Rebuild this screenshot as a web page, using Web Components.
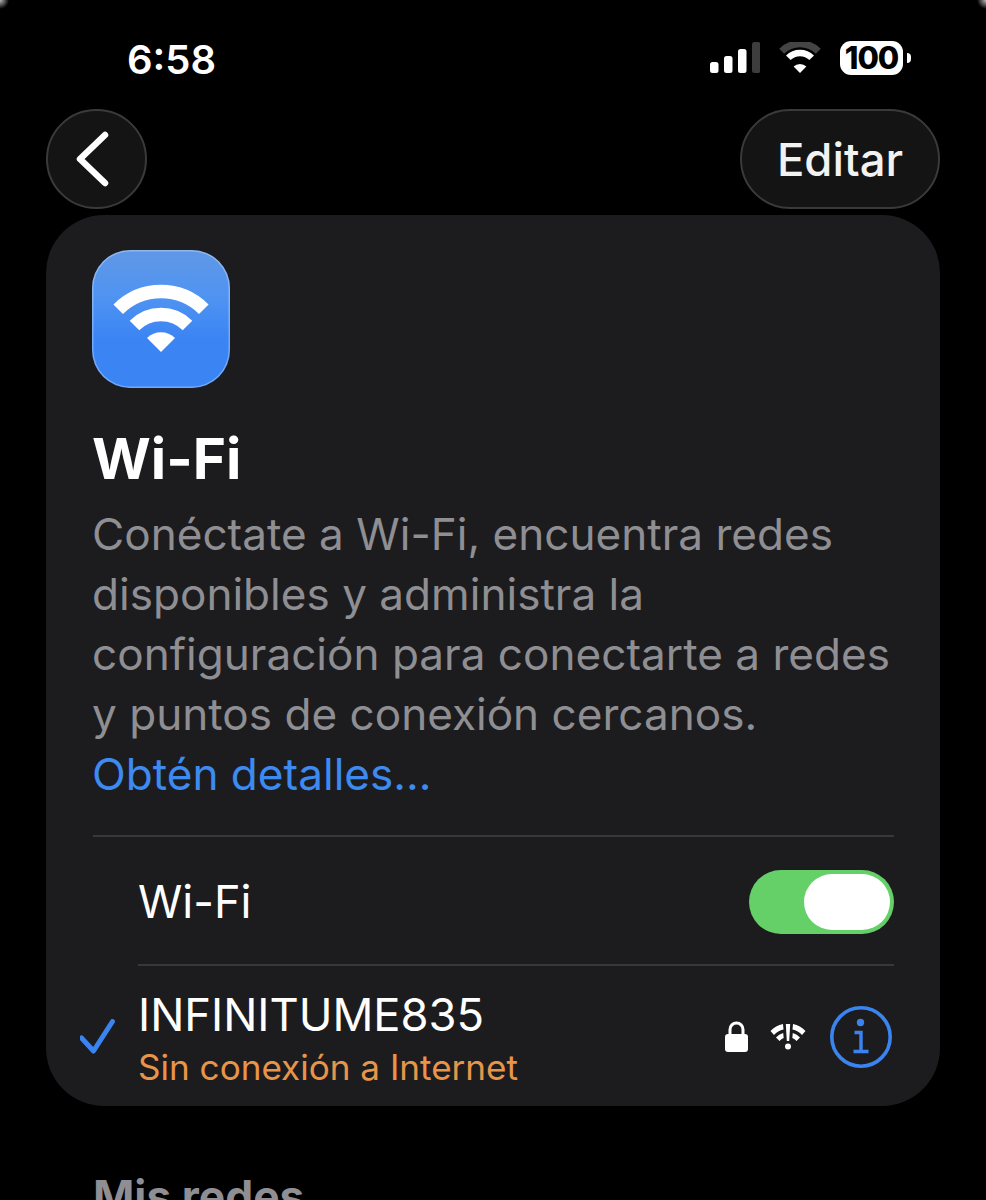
<!DOCTYPE html>
<html lang="es">
<head>
<meta charset="utf-8">
<title>Wi-Fi</title>
<style>
  html { background: radial-gradient(circle 9px at 100% 0, #b8b8b8, #000) no-repeat top right / 12px 12px, radial-gradient(circle 9px at 0 0, #b8b8b8, #000) no-repeat top left / 12px 12px, #000; }
  html, body { margin: 0; height: 1200px; overflow: hidden; }
  body { font-family: Inter, "Noto Sans", sans-serif; color: #fff; }
</style>
</head>
<body>
<wifi-settings></wifi-settings>
<script>
class StatusBar extends HTMLElement {
  constructor() {
    super()
    this.attachShadow({ mode: 'open' })
    this.shadowRoot.innerHTML = `
      <style>
        :host { display: flex; align-items: center; height: 109px; padding: 10px 75px 0 127px; box-sizing: border-box; }
        .time { font-size: 40px; font-weight: 600; line-height: 48px; flex: 1; }
        .icons { display: flex; align-items: center; margin-top: -3px; }
        .battery { display: flex; align-items: center; margin-left: 18px; }
        .level { width: 63px; height: 34px; border-radius: 11px; background: #fff; color: #000; font-size: 31px; font-weight: 800; letter-spacing: -1px; line-height: 34px; text-align: center; }
        .nub { width: 4px; height: 10px; margin-left: 4px; background: #fff; border-radius: 0 4px 4px 0; }
        svg { display: block; }
      </style>
      <div class="time">6:58</div>
      <div class="icons">
        <svg width="50" height="32" viewBox="0 0 50 32" style="margin-right:18px">
          <rect x="0" y="20" width="8.5" height="11" rx="2.5" fill="#fff"/>
          <rect x="14" y="14" width="8.5" height="17" rx="2.5" fill="#fff"/>
          <rect x="28" y="7" width="8.5" height="24" rx="2.5" fill="#fff"/>
          <rect x="42" y="0" width="8.5" height="31" rx="2.5" fill="#3d3d3d"/>
        </svg>
        <svg width="44" height="32" viewBox="0 0 44 32">
          <path d="M3.7 9.2A26 26 0 0 1 40.3 9.2" fill="none" stroke="#444" stroke-width="7"/>
          <path d="M10.3 15.8A16.6 16.6 0 0 1 33.7 15.8" fill="none" stroke="#fff" stroke-width="6.5"/>
          <path d="M22 31L15.6 24.600A9 9 0 0 1 28.4 24.600Z" fill="#fff"/>
        </svg>
        <div class="battery"><div class="level">100</div><div class="nub"></div></div>
      </div>`
  }
}
customElements.define('status-bar', StatusBar)

class GlassButton extends HTMLElement {
  constructor() {
    super()
    this.attachShadow({ mode: 'open' })
    this.shadowRoot.innerHTML = `
      <style>
        :host { display: flex; align-items: center; justify-content: center; box-sizing: border-box; height: 100px; min-width: 101px; border-radius: 50px; background: #141414; border: 2px solid #3a3a3a; font-size: 45.500px; font-weight: 500; color: #f2f2f2; }
      </style>
      <slot></slot>`
  }
}
customElements.define('glass-button', GlassButton)

class WifiToggle extends HTMLElement {
  constructor() {
    super()
    this.attachShadow({ mode: 'open' })
    this.shadowRoot.innerHTML = `
      <style>
        :host { display: flex; justify-content: flex-end; align-items: center; box-sizing: border-box; width: 145px; height: 64px; padding-right: 4px; border-radius: 32px; background: #65d068; }
        .knob { width: 86px; height: 56px; border-radius: 28px; background: #fff; }
      </style>
      <div class="knob"></div>`
  }
}
customElements.define('wifi-toggle', WifiToggle)

class AppTile extends HTMLElement {
  constructor() {
    super()
    this.attachShadow({ mode: 'open' })
    this.shadowRoot.innerHTML = `
      <style>
        :host { display: block; box-sizing: border-box; width: 138px; height: 138px; border-radius: 38px; background: linear-gradient(#6098e6 0%, #4f93f2 35%, #3a84f4 65%, #3a84f4 100%); box-shadow: inset 0 0 0 1.5px rgba(255,255,255,.3); }
        svg { display: block; }
      </style>
      <svg width="138" height="138" viewBox="0 0 138 138">
        <path d="M26.200 59.200A60.500 60.500 0 0 1 111.800 59.200" fill="none" stroke="#fff" stroke-width="13.500"/>
        <path d="M42.500 75.500A37.500 37.500 0 0 1 95.500 75.500" fill="none" stroke="#fff" stroke-width="13.500"/>
        <path d="M69 102L55 88A20 20 0 0 1 83 88Z" fill="#fff"/>
      </svg>`
  }
}
customElements.define('app-tile', AppTile)

class NetworkRow extends HTMLElement {
  constructor() {
    super()
    this.attachShadow({ mode: 'open' })
    this.shadowRoot.innerHTML = `
      <style>
        :host { display: grid; grid-template-columns: 58px 1fr auto; align-items: center; box-sizing: border-box; height: 141px; padding: 0 48px 0 34px; }
        .name { font-size: 45.300px; line-height: 52px; color: #fff; }
        .sub { font-size: 35.100px; line-height: 40px; color: #e8954a; margin-top: 6px; }
        .text { margin-top: 3px; }
        .icons { display: flex; align-items: center; }
        svg { display: block; }
      </style>
      <svg width="36" height="36" viewBox="0 0 36 36"><path d="M1.500 19L13.500 32L32.500 2.500" fill="none" stroke="#3b84f0" stroke-width="5" stroke-linecap="round" stroke-linejoin="round"/></svg>
      <div class="text">
        <div class="name"><slot name="name"></slot></div>
        <div class="sub"><slot name="sub"></slot></div>
      </div>
      <div class="icons">
        <svg width="23" height="31" viewBox="0 0 23 31" style="margin-right:22px">
          <path d="M5 14V8.500A6.500 6.500 0 0 1 18 8.500V14" fill="none" stroke="#fff" stroke-width="3"/>
          <rect x="0" y="13" width="23" height="18" rx="3" fill="#fff"/>
        </svg>
        <svg width="36" height="27" viewBox="0 0 36 27" style="margin-right:24px">
          <path d="M0.500 8A24 24 0 0 1 13 1L13.500 6.500A18 18 0 0 0 4 12Z" fill="#fff"/>
          <path d="M35.500 8A24 24 0 0 0 23 1L22.500 6.500A18 18 0 0 1 32 12Z" fill="#fff"/>
          <path d="M6 14.500A14 14 0 0 1 13.200 10L13.700 15A9 9 0 0 0 9.500 18Z" fill="#fff"/>
          <path d="M30 14.500A14 14 0 0 0 22.800 10L22.300 15A9 9 0 0 1 26.500 18Z" fill="#fff"/>
          <path d="M15.800 1H20.200L19.200 18H16.800Z" fill="#fff"/>
          <circle cx="18" cy="23.500" r="3" fill="#fff"/>
        </svg>
        <svg width="62" height="62" viewBox="0 0 62 62">
          <circle cx="31" cy="31" r="29.200" fill="none" stroke="#3b84f0" stroke-width="3.600"/>
          <circle cx="30.500" cy="16.500" r="3.700" fill="#3b84f0"/>
          <path d="M24.500 26.500H31V45M23.500 45.500H38.500" fill="none" stroke="#3b84f0" stroke-width="3.400"/>
        </svg>
      </div>`
  }
}
customElements.define('network-row', NetworkRow)

class WifiCard extends HTMLElement {
  constructor() {
    super()
    this.attachShadow({ mode: 'open' })
    this.shadowRoot.innerHTML = `
      <style>
        :host { display: block; box-sizing: border-box; margin: 6px 46px 0; height: 891px; border-radius: 58px; background: #1c1c1e; overflow: hidden; }
        .head { padding: 35px 46px 0 46px; }
        h1 { margin: 38px 0 0; font-size: 56.700px; line-height: 66px; font-weight: 700; color: #fff; }
        p { margin: 12px 0 0; font-size: 44.100px; line-height: 60px; color: #8e8e93; }
        a { color: #3d8af0; text-decoration: none; display: block; }
        .rule { height: 2px; background: #38383a; margin: 31px 46px 0 47px; }
        .toggle-row { display: flex; align-items: center; justify-content: space-between; box-sizing: border-box; height: 127px; padding-top: 2px; margin: 0 46px 0 92px; font-size: 45px; }
        .rule.inset { margin: 0 46px 0 92px; }
      </style>
      <div class="head">
        <app-tile></app-tile>
        <h1>Wi-Fi</h1>
        <p>Conéctate a Wi-Fi, encuentra redes disponibles y administra la configuración para conectarte a redes y puntos de conexión cercanos.<a>Obtén detalles...</a></p>
      </div>
      <div class="rule"></div>
      <div class="toggle-row"><span>Wi-Fi</span><wifi-toggle></wifi-toggle></div>
      <div class="rule inset"></div>
      <slot></slot>`
  }
}
customElements.define('wifi-card', WifiCard)

class WifiSettings extends HTMLElement {
  constructor() {
    super()
    this.attachShadow({ mode: 'open' })
    this.shadowRoot.innerHTML = `
      <style>
        :host { display: block; }
        nav { display: flex; justify-content: space-between; padding: 0 46px; }
        .edit { width: 200px; }
        .back { margin-right: 9px; }
        h2 { margin: 66px 0 0 93px; font-size: 44.400px; line-height: 48px; font-weight: 700; color: #8e8e93; }
        svg { display: block; }
      </style>
      <status-bar></status-bar>
      <nav>
        <glass-button>
          <svg class="back" width="34" height="56" viewBox="0 0 34 56"><path d="M30 4L5 28L30 52" fill="none" stroke="#fff" stroke-width="6.500" stroke-linecap="round" stroke-linejoin="round"/></svg>
        </glass-button>
        <glass-button class="edit">Editar</glass-button>
      </nav>
      <wifi-card>
        <network-row><span slot="name">INFINITUME835</span><span slot="sub">Sin conexión a Internet</span></network-row>
      </wifi-card>
      <h2>Mis redes</h2>`
  }
}
customElements.define('wifi-settings', WifiSettings)
</script>
</body>
</html>
